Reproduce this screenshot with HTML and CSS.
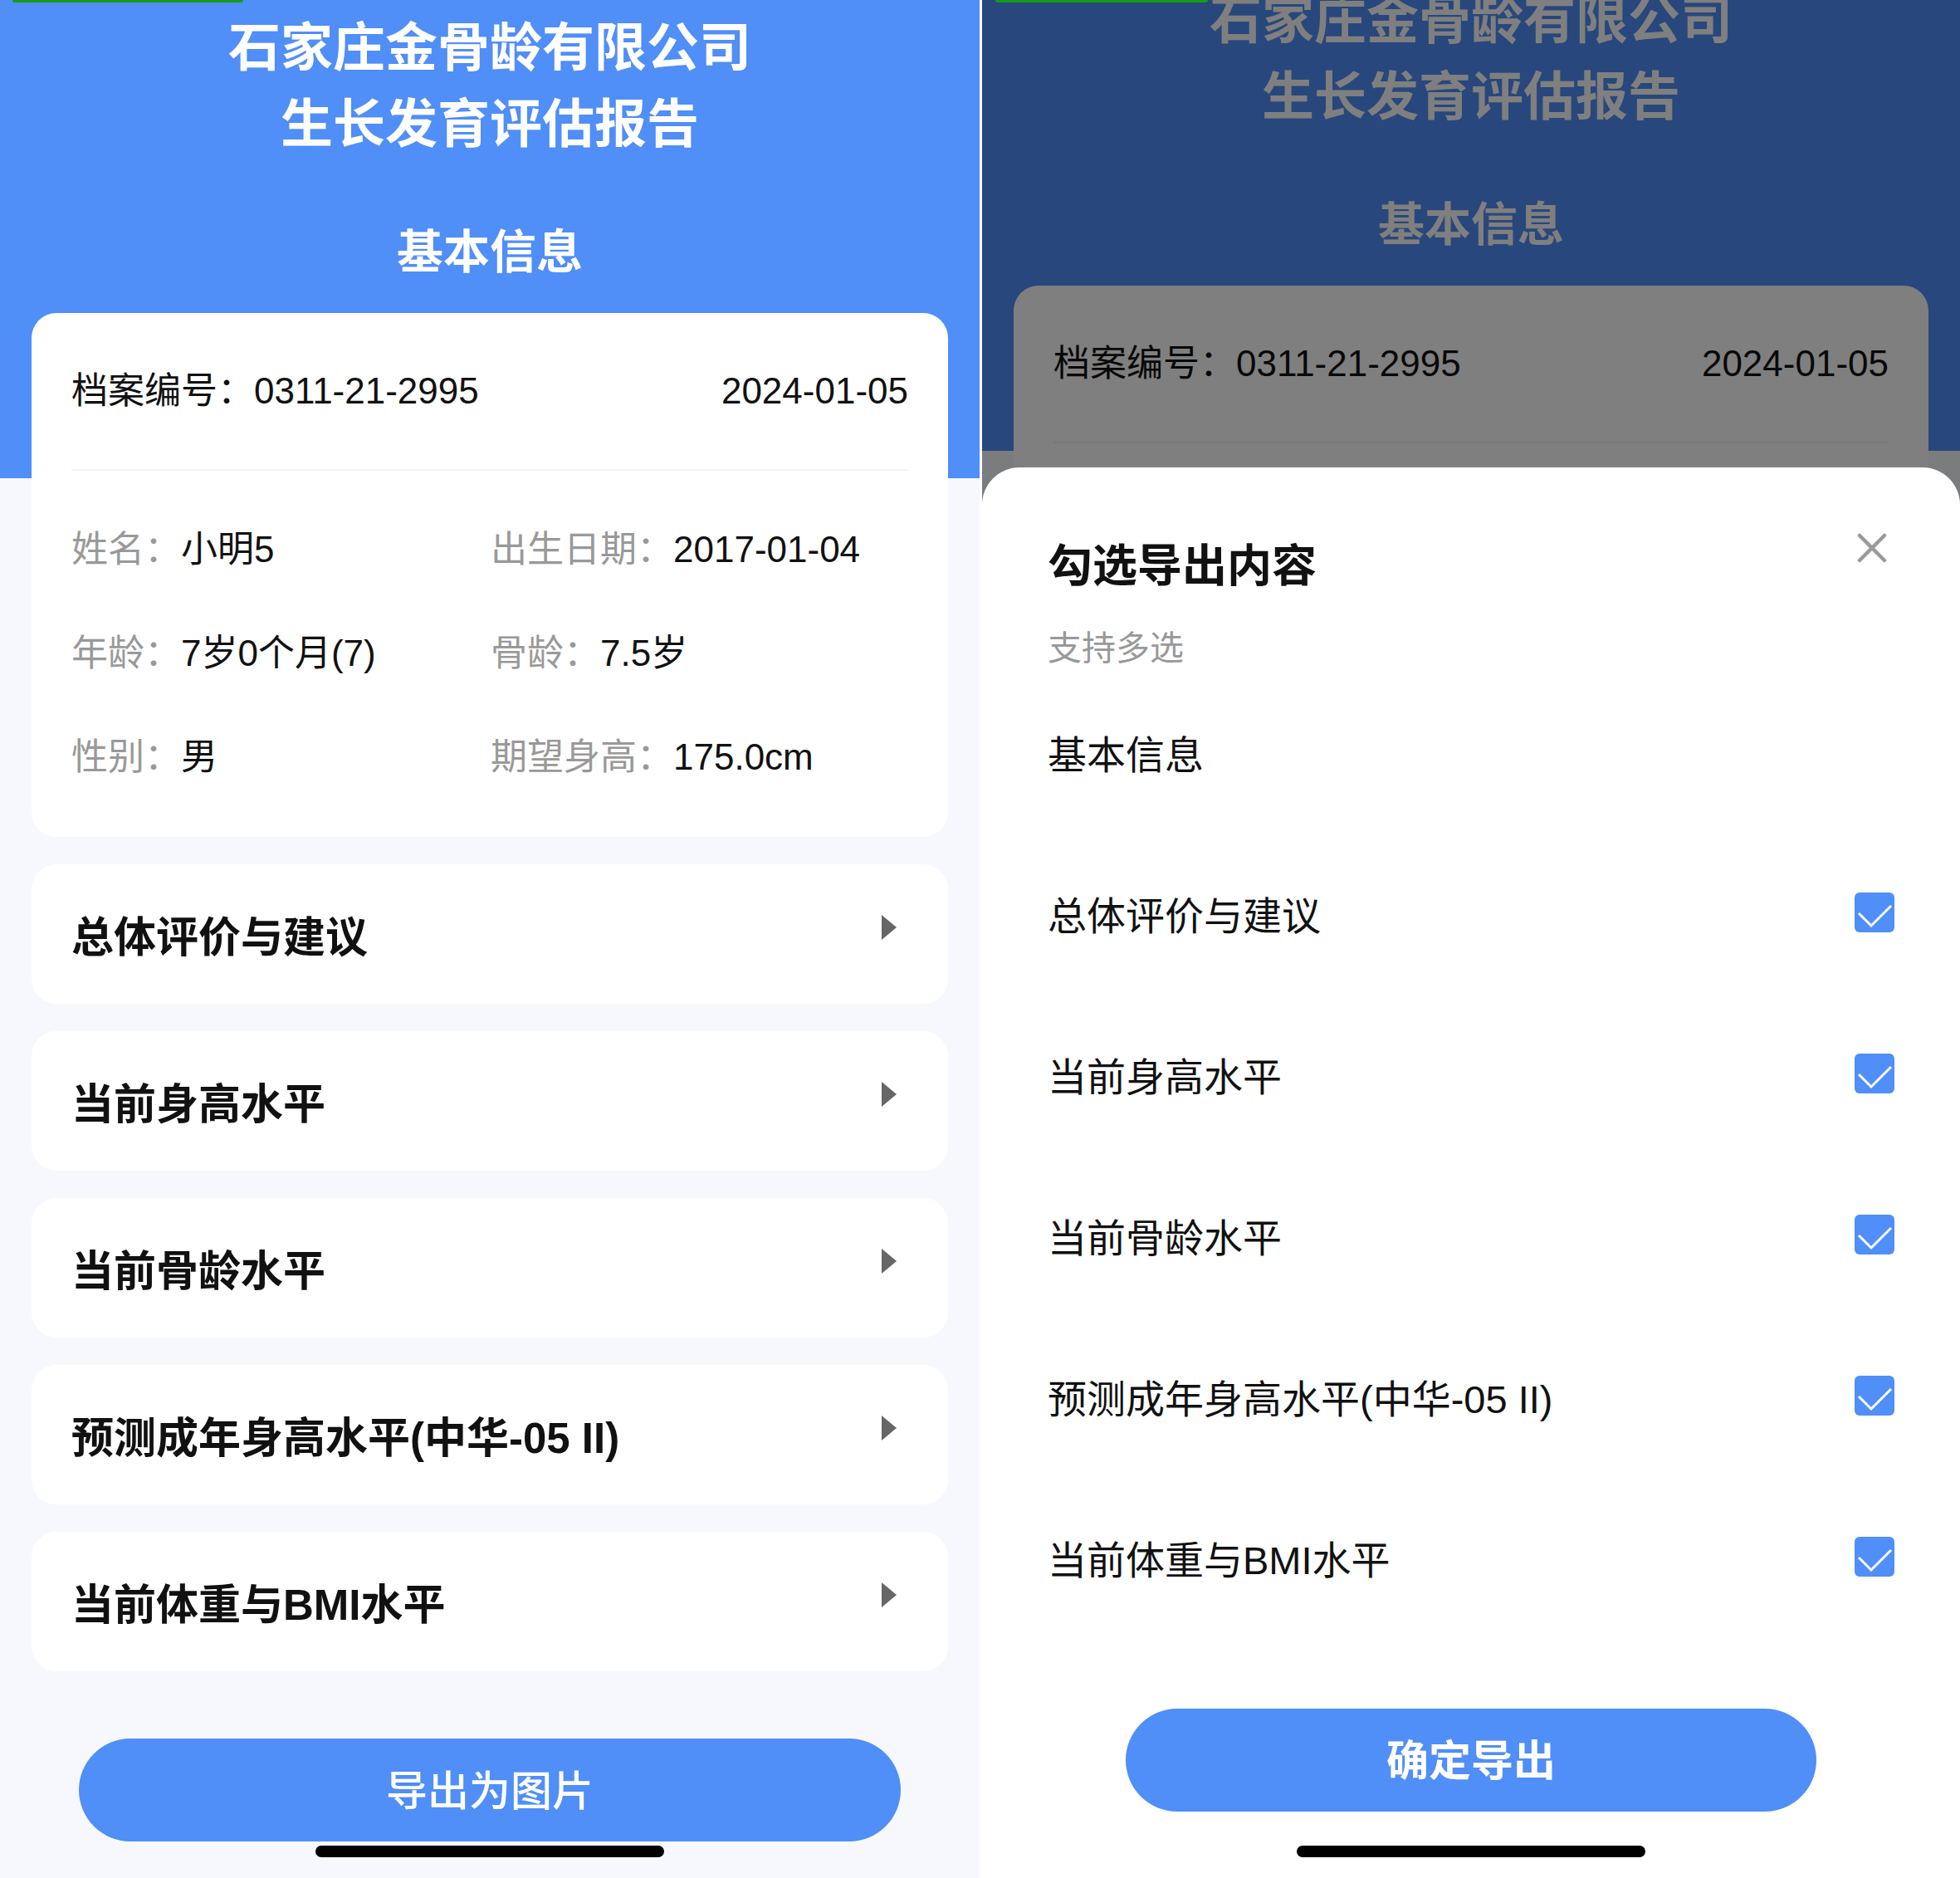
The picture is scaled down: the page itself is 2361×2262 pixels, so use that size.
FILE: index.html
```html
<!DOCTYPE html>
<html lang="zh-CN">
<head>
<meta charset="utf-8">
<title>生长发育评估报告</title>
<link rel="stylesheet" href="styles.css">
</head>
<body>
<div class="screens">
  <section class="phone left">
    <div class="page">
      <h1 class="report-title">石家庄金骨龄有限公司<br>生长发育评估报告</h1>
      <h2 class="section-title">基本信息</h2>
      <div class="info-card">
        <div class="info-head"><span>档案编号：0311-21-2995</span><span>2024-01-05</span></div>
        <div class="info-grid">
          <div class="field"><span class="lbl">姓名：</span>小明5</div>
          <div class="field"><span class="lbl">出生日期：</span>2017-01-04</div>
          <div class="field"><span class="lbl">年龄：</span>7岁0个月(7)</div>
          <div class="field"><span class="lbl">骨龄：</span>7.5岁</div>
          <div class="field"><span class="lbl">性别：</span>男</div>
          <div class="field"><span class="lbl">期望身高：</span>175.0cm</div>
        </div>
      </div>
      <div class="menu">
        <div class="menu-item"><span>总体评价与建议</span><i class="arrow"></i></div>
        <div class="menu-item"><span>当前身高水平</span><i class="arrow"></i></div>
        <div class="menu-item"><span>当前骨龄水平</span><i class="arrow"></i></div>
        <div class="menu-item"><span>预测成年身高水平(中华-05 II)</span><i class="arrow"></i></div>
        <div class="menu-item"><span>当前体重与BMI水平</span><i class="arrow"></i></div>
      </div>
      <button class="btn btn-export">导出为图片</button>
    </div>
    <div class="status-strip"></div>
    <div class="home-bar"></div>
  </section>

  <section class="phone right">
    <div class="page scrolled">
      <h1 class="report-title">石家庄金骨龄有限公司<br>生长发育评估报告</h1>
      <h2 class="section-title">基本信息</h2>
      <div class="info-card">
        <div class="info-head"><span>档案编号：0311-21-2995</span><span>2024-01-05</span></div>
        <div class="info-grid">
          <div class="field"><span class="lbl">姓名：</span>小明5</div>
          <div class="field"><span class="lbl">出生日期：</span>2017-01-04</div>
        </div>
      </div>
    </div>
    <div class="mask"></div>
    <div class="sheet">
      <h3 class="sheet-title">勾选导出内容</h3>
      <svg class="close" viewBox="0 0 36 36" width="36" height="36"><path d="M3 3 L33 33 M33 3 L3 33" stroke="#999" stroke-width="4.5" stroke-linecap="round" fill="none"/></svg>
      <p class="sheet-sub">支持多选</p>
      <ul class="options">
        <li class="option"><span>基本信息</span></li>
        <li class="option"><span>总体评价与建议</span><svg class="check" viewBox="0 0 48 48" width="48" height="48"><rect width="48" height="48" rx="6" fill="#508ef8"/><path d="M5 25 L20 40 L44 16" stroke="#fff" stroke-width="3" fill="none"/></svg></li>
        <li class="option"><span>当前身高水平</span><svg class="check" viewBox="0 0 48 48" width="48" height="48"><rect width="48" height="48" rx="6" fill="#508ef8"/><path d="M5 25 L20 40 L44 16" stroke="#fff" stroke-width="3" fill="none"/></svg></li>
        <li class="option"><span>当前骨龄水平</span><svg class="check" viewBox="0 0 48 48" width="48" height="48"><rect width="48" height="48" rx="6" fill="#508ef8"/><path d="M5 25 L20 40 L44 16" stroke="#fff" stroke-width="3" fill="none"/></svg></li>
        <li class="option"><span>预测成年身高水平(中华-05 II)</span><svg class="check" viewBox="0 0 48 48" width="48" height="48"><rect width="48" height="48" rx="6" fill="#508ef8"/><path d="M5 25 L20 40 L44 16" stroke="#fff" stroke-width="3" fill="none"/></svg></li>
        <li class="option"><span>当前体重与BMI水平</span><svg class="check" viewBox="0 0 48 48" width="48" height="48"><rect width="48" height="48" rx="6" fill="#508ef8"/><path d="M5 25 L20 40 L44 16" stroke="#fff" stroke-width="3" fill="none"/></svg></li>
      </ul>
      <button class="btn btn-confirm">确定导出</button>
    </div>
    <div class="status-strip"></div>
    <div class="home-bar"></div>
  </section>
</div>
</body>
</html>
```

FILE: styles.css
```css
* { box-sizing: border-box; margin: 0; padding: 0; }
html, body { width: 2361px; height: 2262px; overflow: hidden; background: #ffffff; }
body {
  font-family: "Liberation Sans", "Noto Sans CJK SC", sans-serif;
  color: #111111;
}
.screens { display: flex; gap: 3px; height: 2262px; }
.phone { position: relative; overflow: hidden; height: 2262px; background: #f6f8fd; }
.phone.left { width: 1180px; }
.phone.right { width: 1178px; }

.page {
  background: linear-gradient(#508ef8 0, #508ef8 576px, #f6f8fd 576px);
  padding: 11px 38px 0;
  min-height: 2262px;
}
.page.scrolled { margin-top: -33px; }

.report-title {
  color: #ffffff;
  font-size: 63px;
  line-height: 92px;
  font-weight: 700;
  text-align: center;
}
.section-title {
  margin-top: 69px;
  color: #ffffff;
  font-size: 56px;
  line-height: 80px;
  font-weight: 700;
  text-align: center;
}

.info-card {
  margin-top: 33px;
  background: #ffffff;
  border-radius: 30px;
  padding: 0 48px 34px;
}
.info-head {
  height: 190px;
  display: flex;
  justify-content: space-between;
  align-items: center;
  border-bottom: 2px solid #f1f2f4;
  font-size: 44px;
  line-height: 60px;
  color: #111111;
}
.info-head span { display: block; height: 60px; line-height: 60px; }
.info-grid {
  padding-top: 32px;
  display: grid;
  grid-template-columns: 505px 1fr;
  font-size: 44px;
  line-height: 125px;
}
.field { white-space: nowrap; }
.lbl { color: #999999; }

.menu { margin-top: 33px; display: flex; flex-direction: column; gap: 33px; }
.menu-item {
  height: 168px;
  background: #ffffff;
  border-radius: 30px;
  display: flex;
  align-items: center;
  justify-content: space-between;
  padding: 0 62px 0 48px;
  font-size: 51px;
  font-weight: 700;
  color: #111111;
}
.arrow {
  width: 0; height: 0;
  border-left: 18px solid #666666;
  border-top: 15.5px solid transparent;
  border-bottom: 15.5px solid transparent;
  margin-bottom: 16px;
}

.btn {
  display: block;
  margin-left: auto;
  margin-right: auto;
  height: 124px;
  padding-bottom: 7px;
  border: none;
  border-radius: 62px;
  background: #508ef8;
  color: #ffffff;
  font-family: "Liberation Sans", "Noto Sans CJK SC", sans-serif;
}
.btn-export { width: 990px; margin-top: 81px; font-size: 50px; font-weight: 500; }

.status-strip {
  position: absolute; top: 0; left: 15px;
  width: 278px; height: 3px;
  background: #169b16;
  border-radius: 0 0 3px 3px;
}
.phone.right .status-strip { left: 16px; width: 256px; }

.home-bar {
  position: absolute;
  bottom: 25px; left: 50%;
  width: 420px; height: 14px;
  margin-left: -210px;
  border-radius: 7px;
  background: #000000;
}

.mask { position: absolute; inset: 0; background: rgba(0, 0, 0, 0.5); }

.sheet {
  position: absolute;
  left: 0; right: 0; top: 563px; bottom: 0;
  background: #ffffff;
  border-radius: 45px 45px 0 0;
  padding: 84px 79px 0;
}
.sheet-title { font-size: 54px; line-height: 70px; font-weight: 700; color: #111111; }
.close { position: absolute; top: 79px; right: 88px; }
.sheet-sub { margin-top: 34px; font-size: 41px; line-height: 60px; color: #999999; }
.options { list-style: none; }
.option {
  height: 194px;
  padding-bottom: 6px;
  display: flex;
  align-items: center;
  justify-content: space-between;
  font-size: 47px;
  color: #111111;
}
.check { display: block; margin-bottom: 0; }
.btn-confirm { width: 832px; margin-top: 83px; font-size: 51px; font-weight: 700; }
```
